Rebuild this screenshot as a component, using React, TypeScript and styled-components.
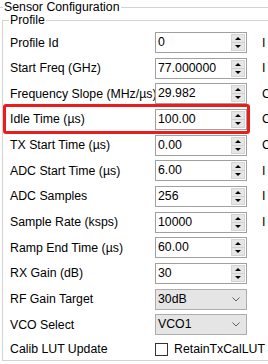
import React from "react";
import styled, { createGlobalStyle, css } from "styled-components";

const Global = createGlobalStyle`
  html, body { margin: 0; padding: 0; background: #fff; overflow: hidden; }
  body {
    font-family: "Liberation Sans", Arial, sans-serif;
    font-size: 12.3px;
    color: #000;
  }
  #root { width: 268px; height: 364px; overflow: hidden; }
`;

const Group = styled.fieldset<{ $outer?: boolean }>`
  min-width: 0;
  border: 1px solid #d3d3d3;
  ${(p) =>
    p.$outer
      ? css`
          width: 420px;
          margin: 0;
          border-left: none;
          padding: 0 0 30px 0;
        `
      : css`
          margin: -2px 0 0 2px;
          padding: 4px 0 1px 6px;
        `}
`;

const Legend = styled.legend<{ $outer?: boolean }>`
  padding: 0 1px;
  margin-left: ${(p) => (p.$outer ? 3 : 0)}px;
  line-height: 15px;
`;

const Rows = styled.div`
  display: flex;
  flex-direction: column;
  gap: 4.67px;
`;

const Row = styled.div<{ $highlight?: boolean; $short?: boolean }>`
  position: relative;
  display: flex;
  align-items: center;
  height: ${(p) => (p.$short ? 19 : 21)}px;
  ${(p) =>
    p.$highlight &&
    css`
      &::after {
        content: "";
        position: absolute;
        left: -6px;
        top: -5px;
        width: 247px;
        height: 30px;
        box-sizing: border-box;
        border: 3px solid #ea1c1c;
        border-radius: 3px;
        pointer-events: none;
      }
    `}
`;

const Label = styled.span`
  flex: none;
  width: 146px;
  padding-left: 1px;
  box-sizing: border-box;
  white-space: nowrap;
  overflow: hidden;
`;

const Field = styled.div<{ $kind: "spin" | "select" }>`
  flex: none;
  width: 92px;
  height: 21px;
  box-sizing: border-box;
  display: flex;
  align-items: stretch;
  ${(p) =>
    p.$kind === "spin"
      ? css`
          border: 1px solid #a0a0a0;
          background: #fff;
        `
      : css`
          border: 1px solid #adadad;
          background: #e5e5e5;
        `}
`;

const Value = styled.span`
  flex: 1;
  padding-left: 2px;
  line-height: 19px;
  white-space: nowrap;
  overflow: hidden;
`;

const SpinButtons = styled.div`
  flex: none;
  width: 12px;
  margin: 1px 1px 1px 0;
  display: flex;
  flex-direction: column;
  border: 1px solid #d4d4d4;
  background: #e6e6e6;
`;

const SpinButton = styled.div<{ $down?: boolean }>`
  flex: 1;
  display: flex;
  align-items: center;
  justify-content: center;
  ${(p) => p.$down && css`border-top: 1px solid #d0d0d0;`}
  &::before {
    content: "";
    width: 0;
    height: 0;
    border-left: 3px solid transparent;
    border-right: 3px solid transparent;
    ${(p) =>
      p.$down
        ? css`border-top: 3px solid #000;`
        : css`border-bottom: 3px solid #000;`}
  }
`;

const Chevron = styled.svg`
  flex: none;
  align-self: center;
  margin-right: 6px;
`;

const Check = styled.span`
  flex: none;
  width: 13px;
  height: 13px;
  box-sizing: border-box;
  border: 1px solid #333;
  background: #fff;
`;

const CheckText = styled.span`
  margin-left: 6px;
  white-space: nowrap;
`;

const Extra = styled.span`
  flex: none;
  margin-left: 15px;
  white-space: nowrap;
`;

type RowData =
  | { label: string; kind: "spin"; value: string; extra?: string; highlight?: boolean }
  | { label: string; kind: "select"; value: string; extra?: string }
  | { label: string; kind: "check"; value: string; extra?: string };

const rows: RowData[] = [
  { label: "Profile Id", kind: "spin", value: "0", extra: "I" },
  { label: "Start Freq (GHz)", kind: "spin", value: "77.000000", extra: "I" },
  { label: "Frequency Slope (MHz/µs)", kind: "spin", value: "29.982", extra: "C" },
  { label: "Idle Time (µs)", kind: "spin", value: "100.00", extra: "C", highlight: true },
  { label: "TX Start Time (µs)", kind: "spin", value: "0.00", extra: "C" },
  { label: "ADC Start Time (µs)", kind: "spin", value: "6.00", extra: "I" },
  { label: "ADC Samples", kind: "spin", value: "256", extra: "I" },
  { label: "Sample Rate (ksps)", kind: "spin", value: "10000", extra: "I" },
  { label: "Ramp End Time (µs)", kind: "spin", value: "60.00" },
  { label: "RX Gain (dB)", kind: "spin", value: "30" },
  { label: "RF Gain Target", kind: "select", value: "30dB" },
  { label: "VCO Select", kind: "select", value: "VCO1" },
  { label: "Calib LUT Update", kind: "check", value: "RetainTxCalLUT" },
];

function Control({ row }: { row: RowData }) {
  if (row.kind === "spin") {
    return (
      <Field $kind="spin">
        <Value>{row.value}</Value>
        <SpinButtons>
          <SpinButton />
          <SpinButton $down />
        </SpinButtons>
      </Field>
    );
  }
  if (row.kind === "select") {
    return (
      <Field $kind="select">
        <Value>{row.value}</Value>
        <Chevron width="8" height="5" viewBox="0 0 8 5">
          <path d="M0.5 0.5 L4 4 L7.5 0.5" fill="none" stroke="#606060" strokeWidth="1" />
        </Chevron>
      </Field>
    );
  }
  return (
    <>
      <Check />
      <CheckText>{row.value}</CheckText>
    </>
  );
}

export default function App() {
  return (
    <>
      <Global />
      <Group $outer>
        <Legend $outer>Sensor Configuration</Legend>
        <Group>
          <Legend>Profile</Legend>
          <Rows>
            {rows.map((r) => (
              <Row
                key={r.label}
                $short={r.kind === "check"}
                $highlight={r.kind === "spin" && r.highlight}
              >
                <Label>{r.label}</Label>
                <Control row={r} />
                {r.extra && <Extra>{r.extra}</Extra>}
              </Row>
            ))}
          </Rows>
        </Group>
      </Group>
    </>
  );
}
